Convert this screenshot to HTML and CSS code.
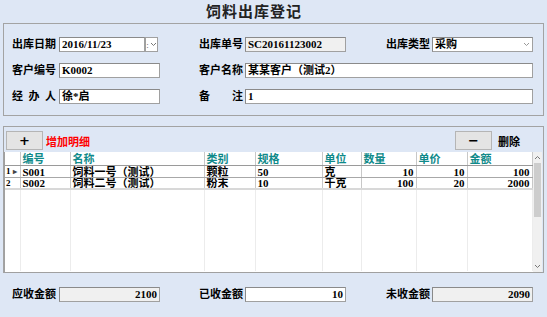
FILE: index.html
```html
<!DOCTYPE html>
<html lang="zh-CN">
<head>
    <meta charset="UTF-8">
    <title>饲料出库登记</title>
    <link rel="stylesheet" href="styles.css">
</head>
<body>
    <!-- Title -->
    <h1 class="title">饲料出库登记</h1>

    <!-- Header Group -->
    <div class="group head">
        <div class="form">
            <label>出库日期</label>
            <div class="date">
                <div class="box">2016/11/23</div>
                <div class="pick">:<svg width="7" height="5" viewBox="0 0 7 5"><path d="M1 1 L3.5 3.5 L6 1" fill="none" stroke="#777" stroke-width="1"/></svg></div>
            </div>
            <span></span>
            <label>出库单号</label>
            <div class="box ro">SC20161123002</div>
            <span></span>
            <label>出库类型</label>
            <div class="box select">采购<svg width="7" height="5" viewBox="0 0 7 5"><path d="M1 1 L3.5 3.5 L6 1" fill="none" stroke="#999" stroke-width="1"/></svg></div>

            <label>客户编号</label>
            <div class="box">K0002</div>
            <span></span>
            <label>客户名称</label>
            <div class="box wide">某某客户（测试2）</div>

            <label class="spread">经办人</label>
            <div class="box">徐*启</div>
            <span></span>
            <label class="spread">备注</label>
            <div class="box wide">1</div>
        </div>
    </div>

    <!-- Detail Group -->
    <div class="group detail">
        <div class="toolbar">
            <button class="btn">+</button>
            <span class="add">增加明细</span>
            <span class="fill"></span>
            <button class="btn">&minus;</button>
            <span class="del">删除</span>
        </div>
        <div class="grid">
            <table>
                <colgroup>
                    <col style="width:15px"><col style="width:50px"><col style="width:134px">
                    <col style="width:51px"><col style="width:67px"><col style="width:39px">
                    <col style="width:55px"><col style="width:51px"><col style="width:65px">
                </colgroup>
                <thead>
                    <tr><th></th><th>编号</th><th>名称</th><th>类别</th><th>规格</th><th>单位</th><th>数量</th><th>单价</th><th>金额</th></tr>
                </thead>
                <tbody>
                    <tr><td class="rh">1 <span class="mark">&#9656;</span></td><td>S001</td><td>饲料一号（测试）</td><td>颗粒</td><td>50</td><td>克</td><td class="num">10</td><td class="num">10</td><td class="num">100</td></tr>
                    <tr class="last"><td class="rh">2</td><td>S002</td><td>饲料二号（测试）</td><td>粉末</td><td>10</td><td>千克</td><td class="num">100</td><td class="num">20</td><td class="num">2000</td></tr>
                    <tr class="filler"><td></td><td></td><td></td><td></td><td></td><td></td><td></td><td></td><td></td></tr>
                </tbody>
            </table>
            <div class="scroll">
                <div class="arrow"><svg width="7" height="5" viewBox="0 0 7 5"><path d="M1 4 L3.5 1.5 L6 4" fill="none" stroke="#777"/></svg></div>
                <div class="thumb"></div>
                <div class="track"></div>
                <div class="arrow"><svg width="7" height="5" viewBox="0 0 7 5"><path d="M1 1 L3.5 3.5 L6 1" fill="none" stroke="#777"/></svg></div>
            </div>
        </div>
    </div>

    <!-- Totals -->
    <div class="form totals">
        <label>应收金额</label>
        <div class="box ro num">2100</div>
        <span></span>
        <label>已收金额</label>
        <div class="box num">10</div>
        <span></span>
        <label>未收金额</label>
        <div class="box ro num">2090</div>
    </div>
</body>
</html>
```

FILE: styles.css
```css
body {
    margin: 0;
    width: 547px;
    height: 317px;
    background-color: #dee7f5;
    font-family: "Liberation Serif", "Noto Sans CJK SC", serif;
    font-size: 11px;
    color: #000;
    overflow: hidden;
}

.title {
    margin: 0;
    height: 23px;
    line-height: 24px;
    padding-left: 206px;
    font-size: 15px;
    font-weight: bold;
    letter-spacing: 1px;
    color: #222;
}

.group {
    border: 1px solid #a3a3a3;
    margin-left: 3px;
    box-sizing: border-box;
}

.head {
    width: 541px;
    height: 93px;
}

.form {
    display: grid;
    grid-template-columns: 47px 101px 39px 46px 101px 40px 46px 101px;
    grid-auto-rows: 15px;
    row-gap: 11px;
    padding: 13px 0 0 8px;
}

.form label {
    font-weight: bold;
    line-height: 15px;
    white-space: nowrap;
}

.form label.spread {
    width: 44px;
    text-align: justify;
    text-align-last: justify;
}

.box {
    box-sizing: border-box;
    height: 15px;
    border: 1px solid #a0a0a0;
    border-top-color: #8a8a8a;
    border-left-color: #8a8a8a;
    background-color: #fff;
    line-height: 13px;
    padding: 0 2px;
    font-weight: bold;
    white-space: nowrap;
    overflow: hidden;
}

.box.ro {
    background-color: #f0f0f0;
}

.box.wide {
    grid-column: 5 / 9;
}

.box.num {
    text-align: right;
}

.date {
    display: flex;
}

.date .box {
    width: 86px;
}

.pick {
    box-sizing: border-box;
    width: 13px;
    height: 15px;
    border: 1px solid #a0a0a0;
    background-color: #fff;
    display: flex;
    align-items: center;
    justify-content: center;
    gap: 1px;
    font-size: 9px;
    color: #555;
}

.select {
    display: flex;
    justify-content: space-between;
    align-items: center;
}

.detail {
    width: 541px;
    height: 147px;
    margin-top: 10px;
    padding: 0 1px;
}

.toolbar {
    display: flex;
    align-items: center;
    height: 19px;
    padding: 4px 0 2px 1px;
}

.btn {
    width: 37px;
    height: 19px;
    padding: 0;
    border: 1px solid #b5b5b5;
    background-color: #e4e4e4;
    font-family: "DejaVu Sans", sans-serif;
    font-size: 13px;
    font-weight: bold;
    line-height: 15px;
}

.add {
    margin-left: 3px;
    color: #ff0000;
    font-weight: bold;
}

.fill {
    flex: 1;
}

.del {
    margin: 0 22px 0 6px;
    font-weight: bold;
}

.grid {
    display: flex;
    height: 120px;
    border-left: 1px solid #a0a0a0;
    border-bottom: 1px solid #a0a0a0;
    margin-left: -1px;
    background-color: #fff;
}

table {
    width: 527px;
    height: 119px;
    table-layout: fixed;
    border-collapse: collapse;
}

th,
td {
    padding: 0 2px;
    font-size: 11px;
    line-height: 10px;
    border-right: 1px solid #c8c8c8;
    white-space: nowrap;
    overflow: hidden;
    text-align: left;
}

th {
    height: 13px;
    color: #0f8a8a;
    font-weight: bold;
    border-bottom: 1px solid #9a9a9a;
}

td {
    height: 10px;
    font-weight: bold;
    border-bottom: 1px solid #a8a8a8;
}

td.num {
    text-align: right;
}

td.rh {
    padding: 0 1px;
    font-size: 9px;
}

.mark {
    font-size: 8px;
    color: #444;
}

tr.last td {
    border-bottom: 2px solid #d8d8d8;
}

tr.filler td {
    height: auto;
    border-bottom: none;
    border-right-color: #ececec;
}

.scroll {
    width: 11px;
    display: flex;
    flex-direction: column;
    background-color: #f0f0f0;
}

.arrow {
    height: 11px;
    display: flex;
    align-items: center;
    justify-content: center;
}

.thumb {
    height: 54px;
    margin: 0 1px;
    background-color: #cdcdcd;
}

.track {
    flex: 1;
}

.totals {
    padding: 14px 0 0 12px;
}
```
